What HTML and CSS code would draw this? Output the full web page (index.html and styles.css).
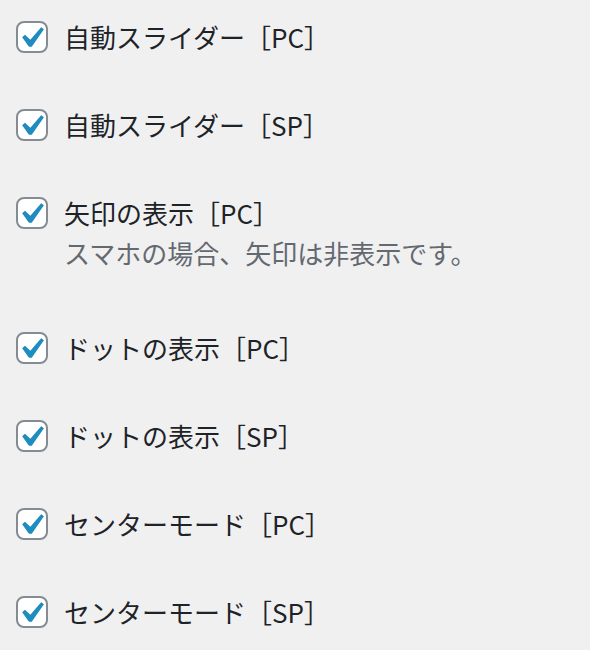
FILE: index.html
```html
<!DOCTYPE html>
<html lang="ja">
<head>
    <meta charset="utf-8">
    <title>スライダー設定</title>
    <link rel="stylesheet" href="styles.css">
</head>
<body>
    <div class="options">
        <label class="option">
            <span class="check"><svg viewBox="0 0 20 20"><path d="M14.83 4.89l1.34.94-5.81 8.38H9.02L5.78 9.67l1.34-1.25 2.57 2.4z"/></svg></span>
            <span class="text">自動スライダー［PC］</span>
        </label>
        <label class="option">
            <span class="check"><svg viewBox="0 0 20 20"><path d="M14.83 4.89l1.34.94-5.81 8.38H9.02L5.78 9.67l1.34-1.25 2.57 2.4z"/></svg></span>
            <span class="text">自動スライダー［SP］</span>
        </label>
        <label class="option">
            <span class="check"><svg viewBox="0 0 20 20"><path d="M14.83 4.89l1.34.94-5.81 8.38H9.02L5.78 9.67l1.34-1.25 2.57 2.4z"/></svg></span>
            <span class="text">矢印の表示［PC］<span class="description">スマホの場合、矢印は非表示です。</span></span>
        </label>
        <label class="option">
            <span class="check"><svg viewBox="0 0 20 20"><path d="M14.83 4.89l1.34.94-5.81 8.38H9.02L5.78 9.67l1.34-1.25 2.57 2.4z"/></svg></span>
            <span class="text">ドットの表示［PC］</span>
        </label>
        <label class="option">
            <span class="check"><svg viewBox="0 0 20 20"><path d="M14.83 4.89l1.34.94-5.81 8.38H9.02L5.78 9.67l1.34-1.25 2.57 2.4z"/></svg></span>
            <span class="text">ドットの表示［SP］</span>
        </label>
        <label class="option">
            <span class="check"><svg viewBox="0 0 20 20"><path d="M14.83 4.89l1.34.94-5.81 8.38H9.02L5.78 9.67l1.34-1.25 2.57 2.4z"/></svg></span>
            <span class="text">センターモード［PC］</span>
        </label>
        <label class="option">
            <span class="check"><svg viewBox="0 0 20 20"><path d="M14.83 4.89l1.34.94-5.81 8.38H9.02L5.78 9.67l1.34-1.25 2.57 2.4z"/></svg></span>
            <span class="text">センターモード［SP］</span>
        </label>
    </div>
</body>
</html>
```

FILE: styles.css
```css
body {
    margin: 0;
    background-color: #f0f0f1;
    font-family: "Noto Sans CJK JP", "Noto Sans", sans-serif;
    color: #1d2327;
}
.options {
    display: flex;
    flex-direction: column;
    gap: 48px;
    padding: 17px 16px;
}
.option {
    display: flex;
    align-items: flex-start;
    gap: 16px;
}
.check {
    flex: none;
    width: 28px;
    height: 28px;
    margin-top: 4px;
    border: 2px solid #858b92;
    border-radius: 8px;
    background-color: #fff;
}
.check svg {
    display: block;
    width: 42px;
    height: 42px;
    margin: -6px 0 0 -8px;
    fill: #1e8cbe;
}
.text {
    font-size: 26px;
    line-height: 40px;
}
.description {
    display: block;
    margin-bottom: 7px;
    color: #646970;
}
```
